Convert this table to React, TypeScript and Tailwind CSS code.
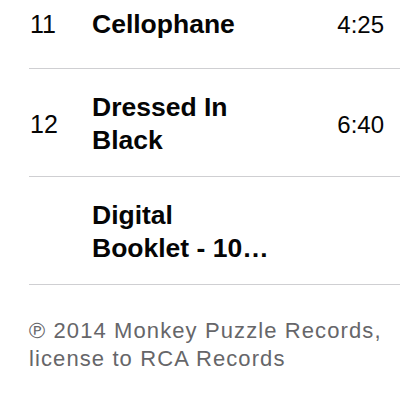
const tracks = [
  { num: "11", title: ["Cellophane"], time: "4:25" },
  { num: "12", title: ["Dressed In", "Black"], time: "6:40" },
  { num: "", title: ["Digital", "Booklet - 10…"], time: "" },
];

export default function App() {
  return (
    <div
      className="w-[400px] h-[400px] overflow-hidden bg-white text-[#050505]"
      style={{ fontFamily: '"Liberation Sans", Arial, sans-serif' }}
    >
      <ul className="pl-[29px]">
        {tracks.map((track, i) => (
          <li
            key={i}
            className={`flex items-center border-b border-[#cfcfd2] pr-4 ${
              i === 0 ? "pt-[8px] pb-[27px]" : "pt-[22px] pb-[19px]"
            }`}
          >
            <span className="w-[63px] pl-[1px] text-[25px] leading-[33px]">{track.num}</span>
            <span className="flex-1 text-[26.5px] font-bold leading-[33px]">
              {track.title.map((line, j) => (
                <span key={j} className="block whitespace-nowrap">
                  {line}
                </span>
              ))}
            </span>
            <span className="text-[24px] leading-[33px]">{track.time}</span>
          </li>
        ))}
      </ul>
      <p className="mt-[32px] pl-[29px] text-[22px] leading-[28px] tracking-[1.1px] text-[#666669]">
        ℗ 2014 Monkey Puzzle Records,
        <br />
        license to RCA Records
      </p>
    </div>
  );
}
